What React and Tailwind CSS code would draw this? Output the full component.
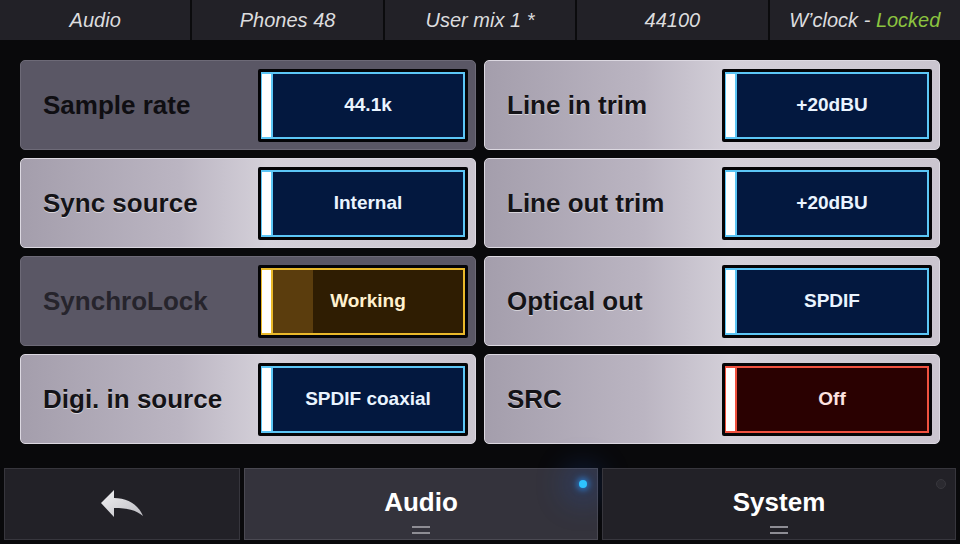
import React from "react";

const themes = {
  blue: { border: "border-[#5cc6f6]", fill: "bg-[#03183f]", text: "text-[#eaf4ff]" },
  yellow: { border: "border-[#eab92a]", fill: "bg-[#2f1d02]", text: "text-[#fff1cf]" },
  red: { border: "border-[#f0513f]", fill: "bg-[#2a0101]", text: "text-[#ffe3e0]" },
};

function ValueBox({ value, theme = "blue", progress = false }) {
  const t = themes[theme];
  return (
    <div className="w-[210px] h-[73px] bg-[#040406] p-[3px] rounded-[2px] flex">
      <div className={`w-[12px] bg-white border-l border-r-2 border-t-2 border-b-2 ${t.border}`} />
      <div className={`flex-1 relative flex items-center justify-center border-t-2 border-b-2 border-r-2 ${t.border} ${t.fill}`}>
        {progress && <div className="absolute left-0 top-0 bottom-0 w-[40px] bg-[#5b3d0d]" />}
        <span className={`relative text-[19px] font-bold ${t.text}`} style={{ fontFamily: '"Liberation Sans", Arial, sans-serif' }}>
          {value}
        </span>
      </div>
    </div>
  );
}

function Card({ label, value, dark = false, labelColor, theme, progress }) {
  return (
    <div
      className={`h-[90px] rounded-[5px] border flex items-center justify-between pl-[22px] pr-[7px] ${
        dark
          ? "bg-[#5a5765] border-[#6d6a77]"
          : "bg-[linear-gradient(90deg,#a49eac_0%,#bbb5c2_35%,#d4d0d9_54%,#cac5cf_100%)] border-[#dcd8e1]"
      }`}
    >
      <span
        className={`text-[26px] font-bold ${labelColor} ${dark ? "" : "[text-shadow:0_1px_0_rgba(255,255,255,0.55)]"}`}
        style={{ fontFamily: '"Liberation Sans", Arial, sans-serif' }}
      >
        {label}
      </span>
      <ValueBox value={value} theme={theme} progress={progress} />
    </div>
  );
}

function TabLines() {
  return (
    <div className="flex flex-col items-center mt-[9px]">
      <div className="w-[18px] h-[2px] bg-[#8e8d94]" />
      <div className="w-[18px] h-[2px] bg-[#8e8d94] mt-[4px]" />
    </div>
  );
}

export default function App() {
  const font = { fontFamily: '"Liberation Sans", Arial, sans-serif' };
  const top = ["Audio", "Phones 48", "User mix 1 *", "44100"];
  return (
    <div className="w-[960px] h-[544px] bg-[#09090b] flex flex-col overflow-hidden" style={font}>
      <div className="h-[40px] grid grid-cols-5 gap-[2px] bg-[#0b0b0d]">
        {top.map((t) => (
          <div key={t} className="bg-[#222127] flex items-center justify-center italic text-[20px] text-[#dcdcde]">
            {t}
          </div>
        ))}
        <div className="bg-[#222127] flex items-center justify-center italic text-[20px] text-[#dcdcde]">
          W’clock -&nbsp;<span className="text-[#8cc43f]">Locked</span>
        </div>
      </div>

      <div className="px-[20px] pt-[20px] grid grid-cols-2 gap-x-[8px] gap-y-[8px]">
        <Card label="Sample rate" value="44.1k" dark labelColor="text-[#0f0e12]" />
        <Card label="Line in trim" value="+20dBU" labelColor="text-[#141317]" />
        <Card label="Sync source" value="Internal" labelColor="text-[#141317]" />
        <Card label="Line out trim" value="+20dBU" labelColor="text-[#141317]" />
        <Card label="SynchroLock" value="Working" dark labelColor="text-[#26242c]" theme="yellow" progress />
        <Card label="Optical out" value="SPDIF" labelColor="text-[#141317]" />
        <Card label="Digi. in source" value="SPDIF coaxial" labelColor="text-[#141317]" />
        <Card label="SRC" value="Off" theme="red" labelColor="text-[#141317]" />
      </div>

      <div className="mt-[24px] px-[4px] flex gap-[4px] h-[72px]">
        <div className="w-[236px] bg-[#222127] border border-[#37363d] flex items-center justify-center">
          <svg width="44" height="30" viewBox="0 0 44 30">
            <defs>
              <linearGradient id="ag" x1="0" y1="0" x2="1" y2="1">
                <stop offset="0" stopColor="#f2f2f4" />
                <stop offset="1" stopColor="#bdbcc2" />
              </linearGradient>
            </defs>
            <path d="M1 14 L14 1 L14 9 C27 9 38 15 43 27 C36 21 27 19 14 19 L14 28 Z" fill="url(#ag)" />
          </svg>
        </div>
        <div className="flex-1 relative bg-[#34333c] border border-[#4a4952] flex flex-col items-center pt-[18px]">
          <div className="absolute left-[334px] top-[11px] w-[8px] h-[8px] rounded-full bg-[#2ec4ff] shadow-[0_0_6px_2px_rgba(40,150,255,0.7),0_0_30px_14px_rgba(30,90,210,0.25)]" />
          <span className="text-[26px] font-bold text-white leading-[30px]">Audio</span>
          <TabLines />
        </div>
        <div className="flex-1 relative bg-[#222127] border border-[#37363d] flex flex-col items-center pt-[18px]">
          <div className="absolute left-[333px] top-[10px] w-[10px] h-[10px] rounded-full bg-[#2b2a30] border border-[#38373d]" />
          <span className="text-[26px] font-bold text-white leading-[30px]">System</span>
          <TabLines />
        </div>
      </div>
    </div>
  );
}
